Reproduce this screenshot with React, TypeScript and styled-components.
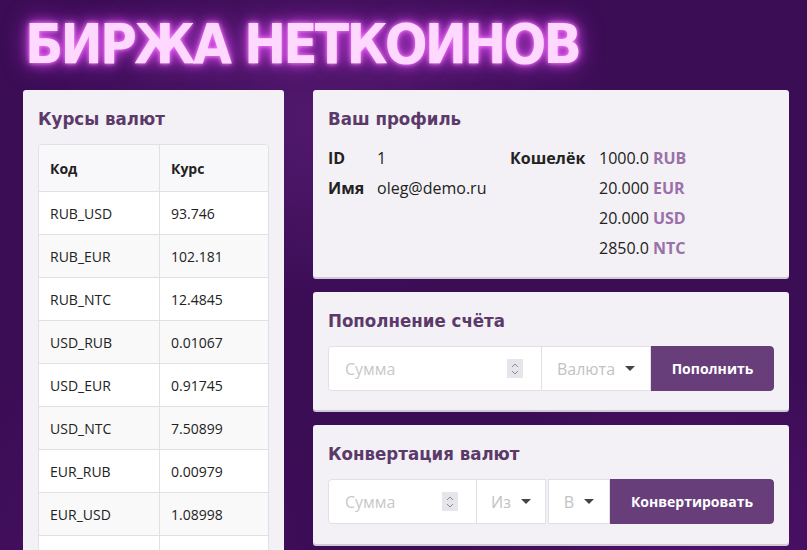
import React from "react";
import styled, { createGlobalStyle } from "styled-components";

const Global = createGlobalStyle`
  html, body { margin: 0; padding: 0; }
  body {
    min-height: 100vh;
    font-family: "Open Sans", "Noto Sans", sans-serif;
    color: #222;
    background-color: #3b0d55;
    background-image:
      radial-gradient(ellipse 420px 260px at 330px 120px, rgba(110, 40, 140, 0.45), rgba(110, 40, 140, 0) 70%),
      radial-gradient(ellipse 360px 300px at 700px 560px, rgba(100, 20, 130, 0.5), rgba(100, 20, 130, 0) 70%),
      radial-gradient(ellipse 300px 300px at 120px 560px, rgba(90, 20, 120, 0.35), rgba(90, 20, 120, 0) 70%);
  }
`;

const Page = styled.div`
  padding: 0 18px 0 23px;
`;

const Title = styled.h1`
  margin: 0;
  padding: 11px 0 0 2px;
  height: 90px;
  box-sizing: border-box;
  font-family: "DejaVu Sans Condensed", "DejaVu Sans", sans-serif;
  font-weight: bold;
  font-size: 56px;
  line-height: 66px;
  letter-spacing: -2.8px;
  color: #ffd8ff;
  text-shadow: 0 0 4px #ff8cff, 0 0 12px #e050f0, 0 0 24px #b030d0;
  white-space: nowrap;
`;

const Layout = styled.div`
  display: grid;
  grid-template-columns: 261px 476px;
  column-gap: 29px;
  align-items: start;
`;

const Column = styled.div`
  display: flex;
  flex-direction: column;
  gap: 15px;
`;

const Card = styled.section<{ $pb?: number }>`
  background: #f3f1f5;
  border-radius: 3px;
  padding: 16px 15px ${(p) => p.$pb ?? 20}px;
  box-shadow: 0 2px 0 #cfcad4;
`;

const CardTitle = styled.h2`
  margin: 0 0 12px;
  font-family: "DejaVu Sans Condensed", "DejaVu Sans", sans-serif;
  font-weight: bold;
  font-size: 18.5px;
  line-height: 26px;
  color: #5b3a6b;
`;

const Table = styled.table`
  width: 100%;
  border-collapse: separate;
  border-spacing: 0;
  border: 1px solid #e2e0e4;
  border-radius: 4px;
  overflow: hidden;
  font-size: 14px;
  background: #fff;
`;

const Th = styled.th`
  text-align: left;
  font-weight: bold;
  height: 46px;
  padding: 0 11px;
  background: #f8f8fa;
  border-bottom: 1px solid #e2e0e4;
  & + & { border-left: 1px solid #e2e0e4; }
`;

const Tr = styled.tr<{ $alt: boolean }>`
  background: ${(p) => (p.$alt ? "#f9f9f9" : "#ffffff")};
`;

const Td = styled.td`
  height: 42px;
  padding: 0 11px;
  border-bottom: 1px solid #e2e0e4;
  color: #222;
  & + & { border-left: 1px solid #e2e0e4; }
  &:first-child { width: 98px; }
`;

const ProfileGrid = styled.div`
  display: grid;
  grid-template-columns: 49px 133px 89px auto;
  grid-auto-rows: 30px;
  align-items: center;
  font-size: 16px;
  margin-top: -1px;
`;

const Label = styled.span`
  font-weight: bold;
`;

const Value = styled.span``;

const Money = styled.span`
  display: flex;
  gap: 4px;
`;

const Cur = styled.span`
  font-weight: bold;
  color: #9a70aa;
`;

const Group = styled.div`
  display: flex;
  height: 45px;
  border-radius: 4px;
  overflow: hidden;
`;

const NumberBox = styled.div<{ $w: number }>`
  width: ${(p) => p.$w}px;
  flex: none;
  box-sizing: border-box;
  display: flex;
  align-items: center;
  justify-content: space-between;
  background: #fff;
  border: 1px solid #e2e0e4;
  border-right: none;
  border-radius: 4px 0 0 4px;
  padding: 0 18px 0 16px;
  font-size: 16px;
  color: #c8c8c8;
`;

const Spin = styled.span`
  width: 16px;
  height: 19px;
  background: #e7e5ec;
  display: flex;
  align-items: center;
  justify-content: center;
`;

const SelectBox = styled.div<{ $w: number; $gap?: number }>`
  width: ${(p) => p.$w}px;
  flex: none;
  box-sizing: border-box;
  display: flex;
  align-items: center;
  justify-content: center;
  gap: 10px;
  background: #fff;
  border: 1px solid #e2e0e4;
  margin-left: ${(p) => p.$gap ?? 0}px;
  font-size: 16px;
  color: #c2c2c2;
`;

const Caret = styled.span`
  width: 0;
  height: 0;
  border-left: 5px solid transparent;
  border-right: 5px solid transparent;
  border-top: 5px solid #444;
`;

const Button = styled.button`
  flex: 1;
  border: none;
  background: #673d7a;
  color: #fff;
  font-family: "Open Sans", sans-serif;
  font-weight: bold;
  font-size: 14px;
  border-radius: 0 4px 4px 0;
  padding: 0;
`;

const SpinIcon = () => (
  <svg width="10" height="14" viewBox="0 0 10 14">
    <path d="M2 5 L5 2 L8 5" fill="none" stroke="#8a8a8a" strokeWidth="1" />
    <path d="M2 9 L5 12 L8 9" fill="none" stroke="#8a8a8a" strokeWidth="1" />
  </svg>
);

const rates: [string, string][] = [
  ["RUB_USD", "93.746"],
  ["RUB_EUR", "102.181"],
  ["RUB_NTC", "12.4845"],
  ["USD_RUB", "0.01067"],
  ["USD_EUR", "0.91745"],
  ["USD_NTC", "7.50899"],
  ["EUR_RUB", "0.00979"],
  ["EUR_USD", "1.08998"],
  ["EUR_NTC", "0.12218"],
];

export default function App() {
  return (
    <>
      <Global />
      <Page>
        <Title>БИРЖА НЕТКОИНОВ</Title>
        <Layout>
          <Card>
            <CardTitle>Курсы валют</CardTitle>
            <Table>
              <thead>
                <tr>
                  <Th>Код</Th>
                  <Th>Курс</Th>
                </tr>
              </thead>
              <tbody>
                {rates.map(([code, rate], i) => (
                  <Tr key={code} $alt={i % 2 === 1}>
                    <Td>{code}</Td>
                    <Td>{rate}</Td>
                  </Tr>
                ))}
              </tbody>
            </Table>
          </Card>
          <Column>
            <Card $pb={14}>
              <CardTitle>Ваш профиль</CardTitle>
              <ProfileGrid>
                <Label>ID</Label>
                <Value>1</Value>
                <Label>Кошелёк</Label>
                <Money>1000.0 <Cur>RUB</Cur></Money>
                <Label>Имя</Label>
                <Value>oleg@demo.ru</Value>
                <span />
                <Money>20.000 <Cur>EUR</Cur></Money>
                <span />
                <span />
                <span />
                <Money>20.000 <Cur>USD</Cur></Money>
                <span />
                <span />
                <span />
                <Money>2850.0 <Cur>NTC</Cur></Money>
              </ProfileGrid>
            </Card>
            <Card $pb={19}>
              <CardTitle>Пополнение счёта</CardTitle>
              <Group>
                <NumberBox $w={213}>
                  Сумма
                  <Spin><SpinIcon /></Spin>
                </NumberBox>
                <SelectBox $w={110}>
                  Валюта <Caret />
                </SelectBox>
                <Button>Пополнить</Button>
              </Group>
            </Card>
            <Card>
              <CardTitle>Конвертация валют</CardTitle>
              <Group>
                <NumberBox $w={148}>
                  Сумма
                  <Spin><SpinIcon /></Spin>
                </NumberBox>
                <SelectBox $w={70}>
                  Из <Caret />
                </SelectBox>
                <SelectBox $w={62} $gap={2}>
                  В <Caret />
                </SelectBox>
                <Button>Конвертировать</Button>
              </Group>
            </Card>
          </Column>
        </Layout>
      </Page>
    </>
  );
}
